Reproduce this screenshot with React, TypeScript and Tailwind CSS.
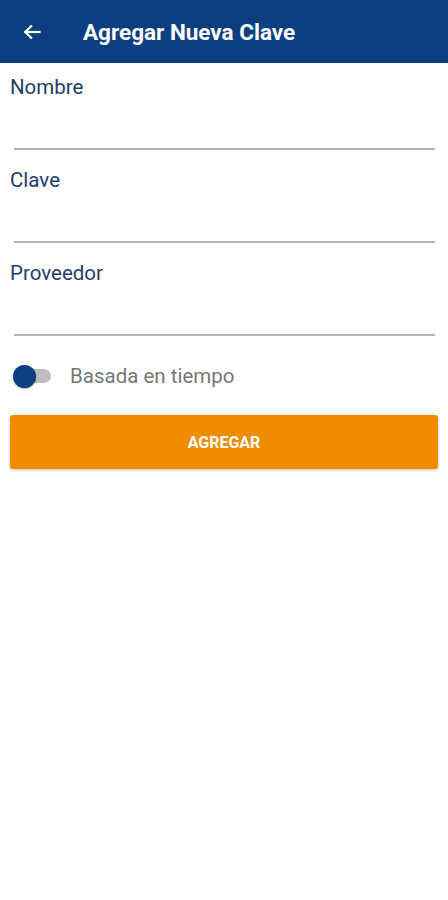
import React from "react";

function Field({ label, first }: { label: string; first?: boolean }) {
  return (
    <div className="flex flex-col">
      <div
        className={
          (first ? "pt-[12px] " : "pt-[18px] ") +
          "pl-[10px] text-[20.5px] leading-[24px] text-[#1f3d6b]"
        }
      >
        {label}
      </div>
      <div className={(first ? "mt-[49px] " : "mt-[49px] ") + "ml-[14px] mr-[13px] h-[2px] bg-[#b3b3b3]"} />
    </div>
  );
}

export default function App() {
  return (
    <div className="flex min-h-[900px] flex-col bg-white" style={{ fontFamily: "Roboto, 'Liberation Sans', sans-serif" }}>
      <div className="flex h-[63px] items-center bg-[#0c3f7f] text-white">
        <div className="ml-[21px] flex h-[22px] w-[22px] items-center justify-center">
          <svg width="20" height="20" viewBox="0 0 24 24" fill="none" stroke="white" strokeWidth="2.6" strokeLinecap="square">
            <path d="M21 12H4" />
            <path d="M11 5l-7 7 7 7" strokeLinejoin="miter" />
          </svg>
        </div>
        <div className="ml-[40px] pt-[3px] text-[22.5px] font-bold">Agregar Nueva Clave</div>
      </div>
      <Field label="Nombre" first />
      <Field label="Clave" />
      <Field label="Proveedor" />
      <div className="mt-[28px] flex h-[24px] items-center">
        <div className="relative ml-[13px] h-[24px] w-[40px]">
          <div className="absolute left-[14px] top-[5px] h-[14px] w-[24px] rounded-full bg-[#bdbdbd]" />
          <div className="absolute left-0 top-[1px] h-[23px] w-[23px] rounded-full bg-[#0c3f7f] shadow-[0_1px_2px_rgba(0,0,0,0.3)]" />
        </div>
        <div className="ml-[17px] text-[20.5px] text-[#777777]">Basada en tiempo</div>
      </div>
      <div className="mx-[10px] mt-[27px] flex h-[54px] items-center justify-center rounded-[3px] bg-[#f08c00] shadow-[0_1px_3px_rgba(0,0,0,0.25)]">
        <span className="pt-[1px] text-[16px] font-bold text-white">AGREGAR</span>
      </div>
    </div>
  );
}
